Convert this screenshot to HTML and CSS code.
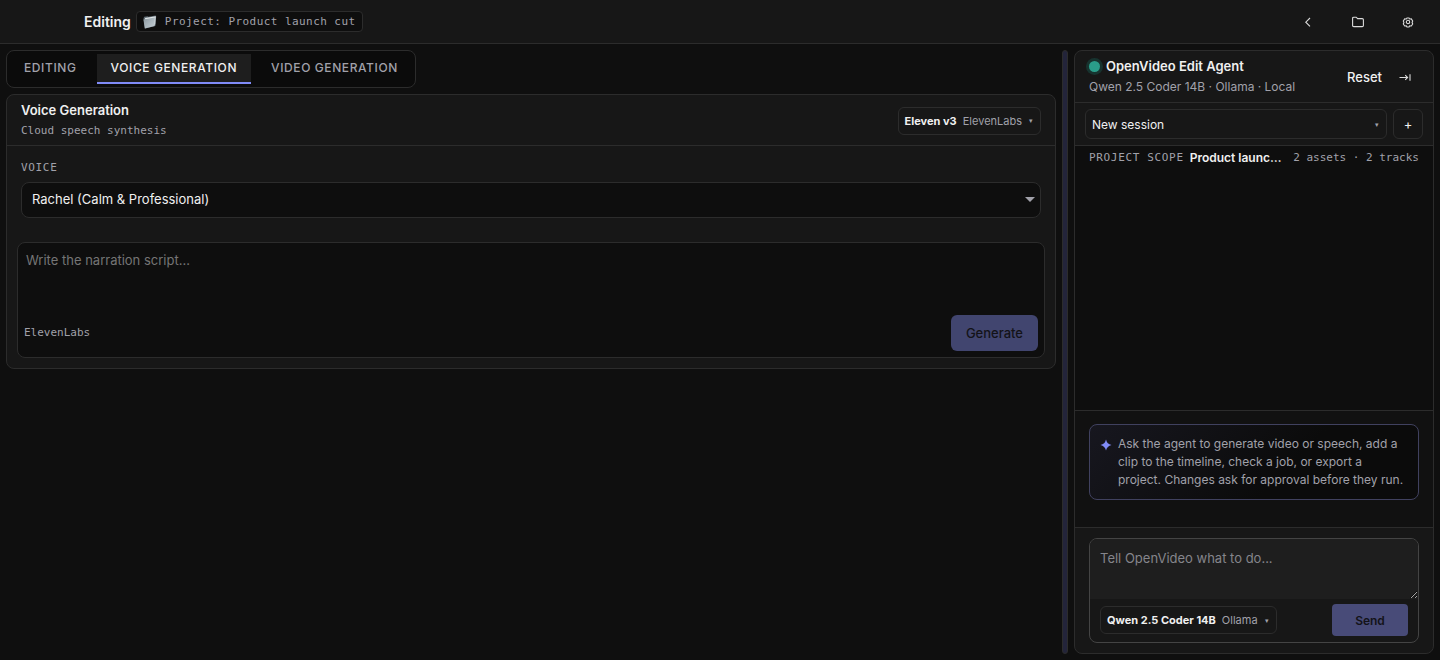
FILE: index.html
```
<!DOCTYPE html>
<html lang="en">
<head>
  <meta charset="UTF-8">
  <meta name="viewport" content="width=device-width, initial-scale=1">
  <title>OpenVideo - Editing</title>
  <link rel="stylesheet" href="styles.css">
</head>
<body>

  <!-- Top bar -->
  <header class="topbar">
    <h1 class="topbar-title">Editing</h1>
    <div class="project-badge">
      <svg class="project-icon" width="14" height="14" viewBox="0 0 14 14" aria-hidden="true">
        <defs>
          <linearGradient id="folderFill" x1="0" y1="0" x2="1" y2="1">
            <stop offset="0" stop-color="#8b979e"/>
            <stop offset="0.5" stop-color="#a9b5bc"/>
            <stop offset="1" stop-color="#c3ccd1"/>
          </linearGradient>
        </defs>
        <path d="M0.5 3.2 L1.2 1.8 L4.6 1.2 L5.4 1.8 L12.6 0.6 L13.2 1.4 L12.4 11 L2 13.4 Z" fill="#5f6b73"/>
        <path d="M2 3 L12.8 1.2 L12.2 9.6 L3 12 Z" fill="#dfe5e8"/>
        <path d="M0.4 4.6 L11.8 2.4 L11.6 11 L1.8 13.4 Z" fill="url(#folderFill)"/>
      </svg>
      <span>Project: Product launch cut</span>
    </div>
    <nav class="topbar-actions">
      <button class="icon-btn" type="button" aria-label="Back">
        <svg width="12" height="12" viewBox="0 0 12 12"><path d="M8 2 L3.8 6.2 L8 10.4"/></svg>
      </button>
      <button class="icon-btn" type="button" aria-label="Projects">
        <svg width="12" height="12" viewBox="0 0 12 12"><path d="M0.6 2.4 Q0.6 1.2 1.8 1.2 H4.2 L5.6 2.6 H10.2 Q11.4 2.6 11.4 3.8 V9.4 Q11.4 10.6 10.2 10.6 H1.8 Q0.6 10.6 0.6 9.4 Z"/></svg>
      </button>
      <button class="icon-btn" type="button" aria-label="Settings">
        <svg width="12" height="12" viewBox="0 0 12 12">
          <path d="M5 2 H7 L7.7 3 L9.3 2.9 L10.7 5 L10.1 6.5 L10.7 8 L9.3 10 L7.7 9.9 L7 11 H5 L4.3 9.9 L2.7 10 L1.3 8 L1.9 6.5 L1.3 5 L2.7 2.9 L4.3 3 Z"/>
          <circle cx="6" cy="6" r="1.7"/>
        </svg>
      </button>
    </nav>
  </header>

  <div class="workspace">

    <!-- Voice generation -->
    <main class="studio">
      <div class="tabs" role="tablist">
        <button class="tab" type="button" role="tab">Editing</button>
        <button class="tab active" type="button" role="tab" aria-selected="true">Voice generation</button>
        <button class="tab" type="button" role="tab">Video generation</button>
      </div>

      <section class="panel">
        <div class="panel-header">
          <div>
            <h2 class="panel-title">Voice Generation</h2>
            <p class="panel-subtitle">Cloud speech synthesis</p>
          </div>
          <button class="model-btn" type="button"><strong>Eleven v3</strong><span>ElevenLabs</span><span class="caret">▾</span></button>
        </div>
        <div class="field">
          <label class="field-label" for="voice">Voice</label>
          <select class="voice-select" id="voice">
            <option>Rachel (Calm &amp; Professional)</option>
          </select>
        </div>
        <form class="script-box">
          <textarea class="script-input" aria-label="Narration script" placeholder="Write the narration script..."></textarea>
          <div class="script-footer">
            <span class="provider">ElevenLabs</span>
            <button class="generate-btn" type="submit" disabled>Generate</button>
          </div>
        </form>
      </section>
    </main>

    <div class="resizer" role="separator"></div>

    <!-- Agent sidebar -->
    <aside class="agent">
      <div class="agent-header">
        <div class="agent-info">
          <h2 class="agent-title"><span class="status-dot"></span>OpenVideo Edit Agent</h2>
          <p class="agent-model">Qwen 2.5 Coder 14B · Ollama · Local</p>
        </div>
        <button class="text-btn" type="button">Reset</button>
        <button class="collapse-btn" type="button" aria-label="Collapse">
          <svg width="12" height="12" viewBox="0 0 12 12"><path d="M0.5 6.5 H8.5 M6.2 4.2 L8.6 6.5 L6.2 8.8 M11 3.2 V9.8"/></svg>
        </button>
      </div>

      <div class="session-row">
        <button class="session-btn" type="button"><span>New session</span><span class="caret">▾</span></button>
        <button class="add-btn" type="button" aria-label="Add session">+</button>
      </div>

      <div class="messages">
        <div class="scope">
          <span class="scope-label">Project scope</span>
          <strong class="scope-name">Product launch cut</strong>
          <span class="scope-meta">2 assets · 2 tracks</span>
        </div>
      </div>

      <div class="hint-area">
        <div class="hint">
          <svg class="hint-icon" width="12" height="12" viewBox="0 0 12 12" aria-hidden="true"><path d="M6 0.5 Q7 5 11.5 6 Q7 7 6 11.5 Q5 7 0.5 6 Q5 5 6 0.5 Z"/></svg>
          <p>Ask the agent to generate video or speech, add a clip to the timeline, check a job, or export a project. Changes ask for approval before they run.</p>
        </div>
      </div>

      <div class="chat-area">
        <form class="chat-box">
          <textarea class="chat-input" aria-label="Message" placeholder="Tell OpenVideo what to do..."></textarea>
          <div class="chat-footer">
            <button class="model-btn" type="button"><strong>Qwen 2.5 Coder 14B</strong><span>Ollama</span><span class="caret">▾</span></button>
            <button class="send-btn" type="submit" disabled>Send</button>
          </div>
        </form>
      </div>
    </aside>

  </div>

</body>
</html>
```
FILE: styles.css
```
:root {
  --bg: #0f0f0f;
  --surface: #171717;
  --raised: #1e1e1e;
  --sunken: #0e0e0e;
  --border: #2c2c2c;
  --text: #f0f0f0;
  --muted: #a1a1aa;
  --accent: #818cf8;
  --mono: "DejaVu Sans Mono", monospace;
}

* {
  box-sizing: border-box;
}
body {
  margin: 0;
  height: 100vh;
  display: flex;
  flex-direction: column;
  background: var(--bg);
  color: var(--text);
  font-family: Inter, sans-serif;
  font-size: 13px;
  line-height: 20px;
}
h1, h2, p {
  margin: 0;
}
button, textarea, select {
  font-family: inherit;
  font-size: 13px;
  color: inherit;
}
button {
  padding: 0;
  border: none;
  background: none;
  cursor: pointer;
}
button svg {
  display: block;
  fill: none;
  stroke: #dcdcdc;
  stroke-width: 1.1;
}

/* Top bar */
.topbar {
  display: flex;
  align-items: center;
  gap: 5px;
  height: 44px;
  padding: 0 12px 0 84px;
  background: var(--surface);
  border-bottom: 1px solid var(--border);
}
.topbar-title {
  font-size: 14px;
  font-weight: 600;
}
.project-badge {
  display: flex;
  align-items: center;
  gap: 8px;
  height: 21px;
  padding: 0 6px;
  border: 1px solid var(--border);
  border-radius: 4px;
  background: var(--sunken);
  color: var(--muted);
  font-family: var(--mono);
  font-size: 11px;
  letter-spacing: 0.04em;
}
.topbar-actions {
  display: flex;
  gap: 10px;
  margin-left: auto;
}
.icon-btn {
  display: grid;
  place-items: center;
  width: 40px;
  height: 32px;
}

.workspace {
  flex: 1;
  min-height: 0;
  display: grid;
  grid-template-columns: 1fr 6px 360px;
  gap: 6px;
  padding: 6px;
}

/* Tabs */
.studio {
  display: flex;
  flex-direction: column;
  align-items: flex-start;
  gap: 6px;
  min-width: 0;
}
.tabs {
  display: flex;
  gap: 6px;
  padding: 3px;
  border: 1px solid var(--border);
  border-radius: 8px;
  background: #0b0b0b;
}
.tab {
  height: 30px;
  padding: 0 14px 2px;
  border-bottom: 2px solid transparent;
  color: var(--muted);
  font-size: 12px;
  font-weight: 500;
  letter-spacing: 0.05em;
  text-transform: uppercase;
}
.tab.active {
  background: var(--raised);
  border-bottom-color: var(--accent);
  color: var(--text);
}

/* Voice panel */
.panel {
  width: 100%;
  border: 1px solid var(--border);
  border-radius: 8px;
  background: var(--surface);
}
.panel-header {
  display: flex;
  align-items: center;
  justify-content: space-between;
  padding: 5px 14px 4px;
  border-bottom: 1px solid var(--border);
}
.panel-title {
  font-size: 13px;
  font-weight: 600;
}
.panel-subtitle {
  margin-top: 1px;
  color: var(--muted);
  font-family: var(--mono);
  font-size: 11px;
}
.model-btn {
  display: flex;
  align-items: center;
  gap: 6px;
  height: 28px;
  padding: 0 6px;
  border: 1px solid var(--border);
  border-radius: 6px;
  color: var(--muted);
  font-size: 11px;
}
.model-btn strong {
  color: var(--text);
  font-weight: 700;
}
.caret {
  width: 6px;
  color: var(--muted);
  font-size: 7px;
  text-align: center;
}
.field {
  display: flex;
  flex-direction: column;
  gap: 4px;
  padding: 12px 14px 24px;
}
.field-label {
  color: var(--muted);
  font-family: var(--mono);
  font-size: 11px;
  letter-spacing: 0.06em;
  text-transform: uppercase;
}
.voice-select {
  appearance: none;
  width: 100%;
  height: 36px;
  padding: 0 10px 2px;
  border: 1px solid var(--border);
  border-radius: 8px;
  background: var(--sunken) url("data:image/svg+xml,%3Csvg xmlns='http://www.w3.org/2000/svg' width='10' height='5'%3E%3Cpath d='M0 0H10L5 5Z' fill='%23a1a1aa'/%3E%3C/svg%3E") no-repeat right 5px top 14px;
}
.script-box {
  margin: 0 10px 10px;
  padding: 6px;
  border: 1px solid var(--border);
  border-radius: 8px;
  background: var(--sunken);
}
.script-input {
  display: block;
  width: 100%;
  height: 66px;
  padding: 1px 2px;
  border: none;
  background: none;
  line-height: 20px;
  resize: none;
}
.script-footer {
  display: flex;
  align-items: center;
  justify-content: space-between;
}
.provider {
  color: var(--muted);
  font-family: var(--mono);
  font-size: 11px;
}
.generate-btn, .send-btn {
  border-radius: 6px;
  background: #41456f;
  color: #131318;
  font-weight: 500;
}
.generate-btn {
  height: 36px;
  padding: 0 15px;
}

.resizer {
  border: 1px solid var(--border);
  border-radius: 4px;
  background: #23243a;
  cursor: col-resize;
}

/* Agent sidebar */
.agent {
  display: flex;
  flex-direction: column;
  min-width: 0;
  border: 1px solid var(--border);
  border-radius: 8px;
  background: var(--surface);
  overflow: hidden;
}
.agent-header {
  display: flex;
  align-items: center;
  gap: 9px;
  padding: 5px 14px;
  border-bottom: 1px solid var(--border);
}
.agent-info {
  flex: 1;
}
.agent-title {
  display: flex;
  align-items: center;
  gap: 6px;
  font-size: 13px;
  font-weight: 600;
}
.status-dot {
  width: 11px;
  height: 11px;
  border-radius: 50%;
  background: #2a9d8a;
  box-shadow: 0 0 0 3px #17332f;
}
.agent-model {
  margin-top: 1px;
  color: var(--muted);
  font-size: 12px;
}
.text-btn {
  font-weight: 500;
}
.collapse-btn {
  display: grid;
  place-items: center;
  width: 28px;
  height: 28px;
}
.session-row {
  display: flex;
  gap: 6px;
  padding: 6px 10px;
  border-bottom: 1px solid var(--border);
}
.session-btn, .add-btn {
  height: 30px;
  border: 1px solid var(--border);
  border-radius: 6px;
}
.session-btn {
  flex: 1;
  display: flex;
  align-items: center;
  justify-content: space-between;
  padding: 0 6px;
  font-size: 12px;
}
.add-btn {
  width: 30px;
}
.messages {
  flex: 1;
  padding: 2px 14px;
  background: var(--sunken);
}
.scope {
  display: flex;
  align-items: center;
  gap: 6px;
  color: var(--muted);
  font-family: var(--mono);
  font-size: 11px;
  white-space: nowrap;
}
.scope-label {
  letter-spacing: 0.06em;
  text-transform: uppercase;
}
.scope-name {
  flex: 1;
  overflow: hidden;
  text-overflow: ellipsis;
  color: var(--text);
  font-family: Inter, sans-serif;
  font-size: 12px;
  font-weight: 600;
}
.hint-area {
  padding: 13px 14px 27px;
  border-top: 1px solid var(--border);
  background: #111111;
}
.hint {
  display: flex;
  gap: 6px;
  padding: 10px;
  border: 1px solid #40415f;
  border-radius: 8px;
  background: linear-gradient(135deg, #17171f, #0b0b0b 60%);
  color: var(--muted);
  font-size: 12px;
  line-height: 18px;
}
.hint-icon {
  flex: none;
  margin-top: 4px;
  fill: var(--accent);
}
.chat-area {
  padding: 10px 14px;
  border-top: 1px solid var(--border);
}
.chat-box {
  border: 1px solid #444444;
  border-radius: 8px;
  overflow: hidden;
}
.chat-input {
  display: block;
  width: 100%;
  height: 60px;
  padding: 9px 10px;
  border: none;
  background: var(--raised);
  line-height: 20px;
  resize: vertical;
}
.chat-footer {
  display: flex;
  align-items: center;
  justify-content: space-between;
  padding: 5px 10px 6px;
}
.send-btn {
  width: 76px;
  height: 32px;
  border-radius: 4px;
  background: #484b78;
  font-size: 12px;
  font-weight: 600;
}
textarea::placeholder {
  color: #757575;
}
.chat-input::placeholder {
  color: #85858b;
}
```
